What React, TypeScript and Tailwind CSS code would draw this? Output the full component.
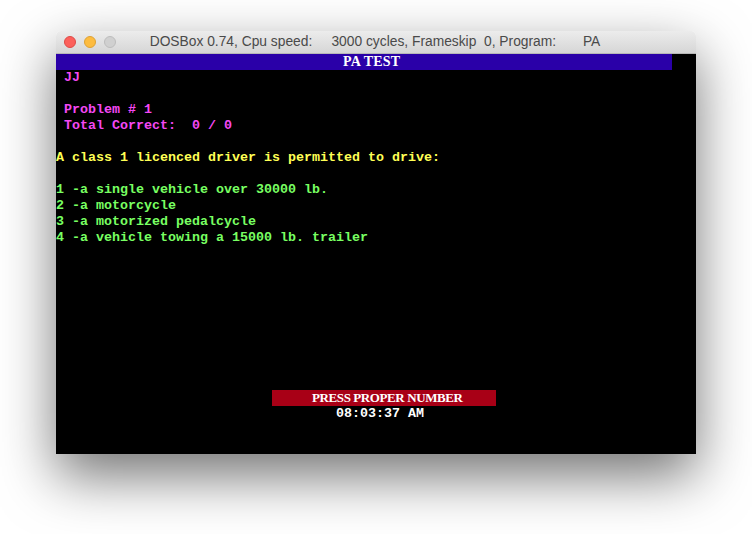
import React from "react";

type Line = { text: string; color: string };

// 80x25 text screen, 8x16 cells
const lines: Line[] = [
  { text: " JJ", color: "text-[#f448f4]" },
  { text: "", color: "" },
  { text: " Problem # 1", color: "text-[#f448f4]" },
  { text: " Total Correct:  0 / 0", color: "text-[#f448f4]" },
  { text: "", color: "" },
  { text: "A class 1 licenced driver is permitted to drive:", color: "text-[#ffff55]" },
  { text: "", color: "" },
  { text: "1 -a single vehicle over 30000 lb.", color: "text-[#78ff62]" },
  { text: "2 -a motorcycle", color: "text-[#78ff62]" },
  { text: "3 -a motorized pedalcycle", color: "text-[#78ff62]" },
  { text: "4 -a vehicle towing a 15000 lb. trailer", color: "text-[#78ff62]" },
];

const mono = "font-['Liberation_Mono','DejaVu_Sans_Mono',monospace] text-[13.33px] leading-4 font-bold whitespace-pre";
const serif = "font-['Liberation_Serif','DejaVu_Serif',serif] leading-4 font-bold whitespace-pre text-white";

const App: React.FC = () => {
  return (
    <div className="w-[752px] h-[534px] bg-white pl-[56px] pt-[31px] overflow-hidden">
      <div className="w-[640px] flex flex-col rounded-t-[5px] shadow-[0_22px_55px_rgba(0,0,0,0.55)]">
        {/* title bar */}
        <div className="h-[23px] flex items-center rounded-t-[5px] bg-gradient-to-b from-[#ececec] to-[#d6d6d6] border-b border-[#b8b8b8]">
          <div className="flex items-center gap-[8px] pl-[8px]">
            <div className="w-[12px] h-[12px] rounded-full bg-[#fc605b] border border-[#de4a46]" />
            <div className="w-[12px] h-[12px] rounded-full bg-[#fdbc40] border border-[#dea234]" />
            <div className="w-[12px] h-[12px] rounded-full bg-[#d0d0d0] border border-[#bdbdbd]" />
          </div>
          <div className="flex-1 text-center pr-[62px] font-['Liberation_Sans','Helvetica',sans-serif] text-[13.8px] text-[#4a4a4a] whitespace-pre">
            {"DOSBox 0.74, Cpu speed:     3000 cycles, Frameskip  0, Program:       PA"}
          </div>
        </div>

        {/* DOS screen */}
        <div className="h-[400px] bg-black flex flex-col">
          <div className={`h-4 w-[616px] bg-[#2a00a8] pl-[287px] text-[14px] tracking-[0.2px] ${serif}`}>PA TEST</div>
          {lines.map((l, i) => (
            <div key={i} className={`h-4 ${mono} ${l.color}`}>
              {l.text}
            </div>
          ))}
          <div className="flex-1" />
          <div className={`h-4 ml-[216px] w-[224px] bg-[#a80016] pl-[40px] text-[13px] tracking-[-0.4px] ${serif}`}>
            PRESS PROPER NUMBER
          </div>
          <div className={`h-4 ${mono} text-white pl-[280px]`}>08:03:37 AM</div>
          <div className="h-[32px]" />
        </div>
      </div>
    </div>
  );
};

export default App;
